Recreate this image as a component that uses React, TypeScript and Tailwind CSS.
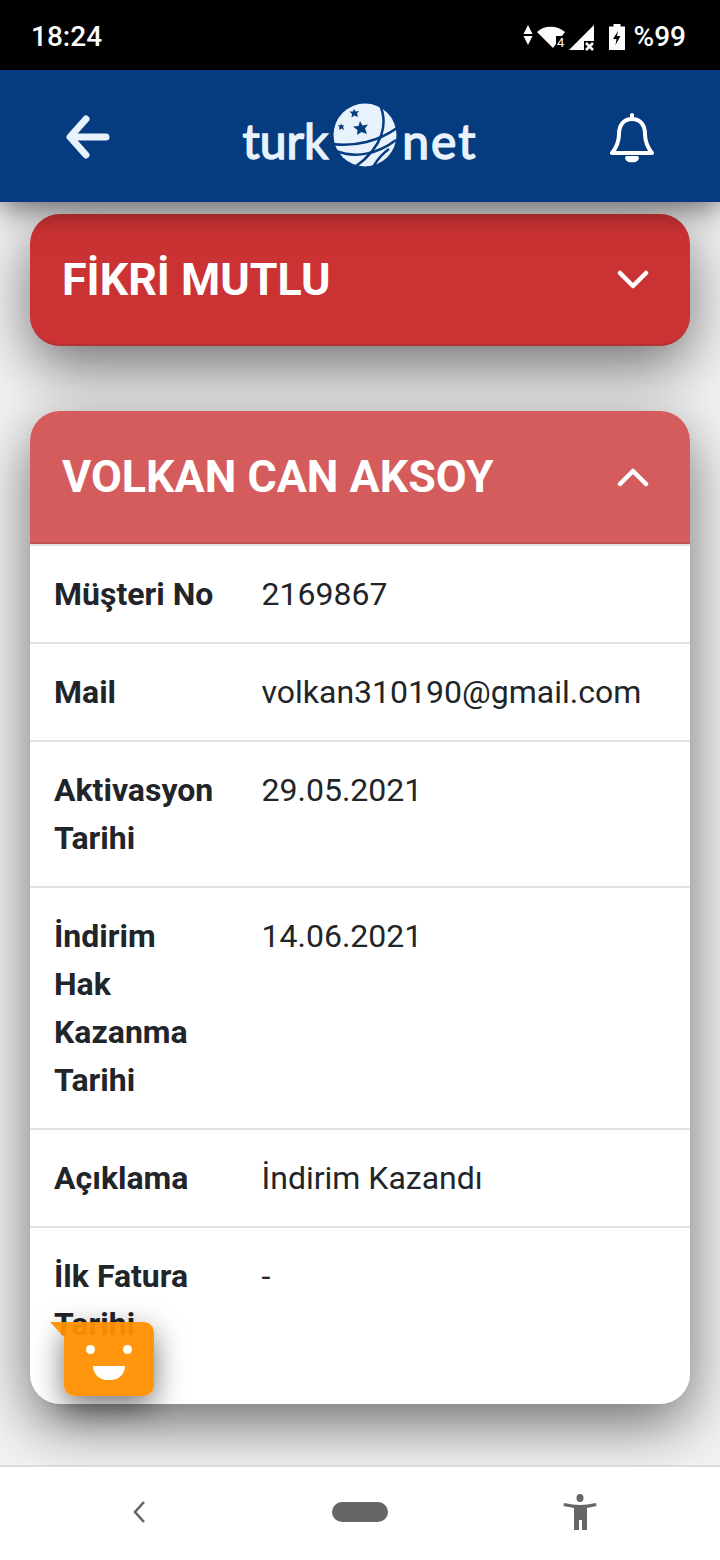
// Turknet customer detail screen

const rows = [
  { label: 'Müşteri No', value: '2169867' },
  { label: 'Mail', value: 'volkan310190@gmail.com' },
  { label: 'Aktivasyon Tarihi', value: '29.05.2021' },
  { label: 'İndirim Hak Kazanma Tarihi', value: '14.06.2021' },
  { label: 'Açıklama', value: 'İndirim Kazandı' },
]

function StatusIcons() {
  return (
    <svg width="73" height="30" viewBox="0 0 73 30" aria-hidden="true">
      {/* data arrows */}
      <path d="M5 3 L9.500 12 L0.500 12 Z M0.500 14 L9.500 14 L5 23 Z" fill="#fff" />
      {/* wifi */}
      <path d="M14 10 C21 3 34 3 42 10 L30 26 Z" fill="#fff" />
      <rect x="33" y="14" width="12" height="14" fill="#000" />
      <text x="34" y="25" fontSize="13" fill="#fff" fontFamily="Roboto, sans-serif">4</text>
      {/* cell signal */}
      <path d="M46 28 L71 3 L71 19 L61 19 L61 28 Z" fill="#fff" />
      <path d="M63 21 L70 28 M70 21 L63 28" stroke="#fff" strokeWidth="2.600" fill="none" />
    </svg>
  )
}

function Globe() {
  return (
    <svg width="64" height="64" viewBox="0 0 64 64" aria-hidden="true">
      <ellipse cx="32" cy="32" rx="31.500" ry="31.500" fill="#e8f2fd" />
      <path d="M46 0 C56 20 50 44 22 64" stroke="#053c7f" strokeWidth="2.500" fill="none" />
      <path d="M-1 41 C22 44 46 38 64 25" stroke="#053c7f" strokeWidth="2.500" fill="none" />
      <path d="M3 48 C24 56 46 50 63 37" stroke="#053c7f" strokeWidth="2.500" fill="none" />
      <path d="M40 64 C46 54 50 50 56 46" stroke="#053c7f" strokeWidth="2.500" fill="none" />
      <polygon points="27,18 29.500,22.500 35,21.500 32,25.500 34,31 28.500,29 24,32 24.500,27 20,23.500 25.500,23" fill="#053c7f" />
      <polygon points="21,6 22.500,8.500 26,8 24,10.500 25,14 21.500,12.500 18.500,14.500 19,11 16.500,8.500 20,8.500" fill="#053c7f" />
      <polygon points="8,20 9,22.500 11.500,22 10,24 11,27 8.500,25.500 6,27 6.500,24.500 5,22 7.500,22.500" fill="#053c7f" />
    </svg>
  )
}

function Chevron({ up }: { up?: boolean }) {
  return (
    <svg className={up ? '' : 'mt-[2px]'} width="32" height="20" viewBox="0 0 32 20" fill="none" stroke="#fff" strokeWidth="4.500" strokeLinecap="round" strokeLinejoin="round" aria-hidden="true">
      <path d={up ? 'M3 17 L16 4 L29 17' : 'M3 3 L16 16 L29 3'} />
    </svg>
  )
}

export default function App() {
  return (
    <div className="relative flex h-[1560px] w-[720px] flex-col overflow-hidden bg-[#f3f3f3] font-['Roboto',sans-serif] text-[#212529]">
      {/* Status bar */}
      <div className="flex h-[70px] items-center justify-between bg-black pl-[31px] pr-[34px] pt-[4px] text-white">
        <span className="text-[28px] font-medium leading-none">18:24</span>
        <div className="flex items-center">
          <StatusIcons />
          <svg className="ml-[13px]" width="16" height="26" viewBox="0 0 16 26" aria-hidden="true">
            <path fillRule="evenodd" d="M4.500 0 H11.500 V2.500 H16 V26 H0 V2.500 H4.500 Z M9 7 L4 15 H7.500 L6.500 21 L11.500 12 H8 Z" fill="#fff" />
          </svg>
          <span className="ml-[9px] text-[28px] font-medium leading-none">%99</span>
        </div>
      </div>

      {/* App header */}
      <header className="relative z-10 flex h-[132px] items-center justify-between bg-[#053c7f] px-[66px] shadow-[0_6px_30px_rgba(0,0,0,0.6)]">
        <svg className="mt-[2px]" width="44" height="44" viewBox="0 0 44 44" fill="none" stroke="#e8f2fd" strokeWidth="7" strokeLinecap="round" strokeLinejoin="round" aria-hidden="true">
          <path d="M40 22 H5 M20 4 L4 22 L20 40" />
        </svg>

        <div className="mb-[2px] flex items-center text-[#e8f2fd]">
          <span className="pt-[12px] font-['Lato',sans-serif] text-[48px] leading-none [-webkit-text-stroke:1.5px_#e8f2fd]">turk</span>
          <div className="mx-[5px]"><Globe /></div>
          <span className="pt-[12px] font-['Lato',sans-serif] text-[48px] leading-none tracking-[2px] [-webkit-text-stroke:1.5px_#e8f2fd]">net</span>
        </div>

        <svg className="mt-[4px]" width="44" height="50" viewBox="0 0 44 50" fill="none" stroke="#fff" strokeWidth="4" strokeLinecap="round" strokeLinejoin="round" aria-hidden="true">
          <path d="M22 2 V6 M22 6 C13 6 9 13 9 21 C9 30 6 35 2 40 H42 C38 35 35 30 35 21 C35 13 31 6 22 6 Z" />
          <path d="M17 45 H27 C26 48 18 48 17 45 Z" fill="#fff" />
        </svg>
      </header>

      {/* Customer list */}
      <main className="flex flex-1 flex-col gap-[65px] px-[30px] pt-3">
        <section className="flex h-[132px] items-center justify-between rounded-[30px] border-b-2 border-[#b53032] bg-[#cb3234] pl-[32px] pr-[41px] text-white shadow-[0_20px_60px_rgba(0,0,0,0.55)]">
          <h2 className="pt-[2px] text-[44.8px] font-bold leading-none">FİKRİ MUTLU</h2>
          <Chevron />
        </section>

        <section className="h-[993px] overflow-hidden rounded-[30px] bg-white shadow-[0_20px_60px_rgba(0,0,0,0.55)]">
          <div className="flex h-[133px] items-center justify-between border-b-2 border-[#bf5253] bg-[#d55c5c] pl-[32px] pr-[41px] text-white">
            <h2 className="pt-[2px] text-[44.8px] font-bold leading-none">VOLKAN CAN AKSOY</h2>
            <Chevron up />
          </div>

          <div className="border-t-2 border-[#dee2e6]">
            {rows.map((row) => (
              <div key={row.label} className="flex border-b-2 border-[#dee2e6] text-[32px] leading-[48px]">
                <div className="w-[208px] shrink-0 p-6 font-bold">{row.label}</div>
                <div className="py-6 pl-[23.5px]">{row.value}</div>
              </div>
            ))}

            <div className="flex text-[32px] leading-[48px]">
              <div className="w-[208px] shrink-0 p-6 font-bold">İlk Fatura Tarihi</div>
              <div className="py-6 pl-[23.5px]">-</div>
            </div>
          </div>
        </section>
      </main>

      {/* Chat bubble */}
      <div className="absolute left-[64px] top-[1322px] z-20 flex h-[74px] w-[90px] flex-col items-center rounded-b-[10px] rounded-tr-[10px] bg-[#ff9000]/95 shadow-[0_10px_30px_rgba(0,0,0,0.55)]">
        <div className="absolute -left-[14px] top-0 h-0 w-0 border-r-[14px] border-t-[15px] border-r-[#ff9000]/95 border-t-transparent [transform:scaleY(-1)]" />
        <div className="mt-[23px] flex gap-[28px]">
          <span className="h-[9px] w-[9px] rounded-full bg-white" />
          <span className="h-[9px] w-[9px] rounded-full bg-white" />
        </div>
        <div className="mt-[12px] h-[14px] w-[32px] rounded-b-[16px] bg-white" />
      </div>

      {/* Android navigation bar */}
      <nav className="flex h-[95px] items-center border-t-2 border-[#dcdae0] bg-white">
        <div className="flex w-full items-center justify-between pb-[4px] pl-[131px] pr-[123px]">
          <svg className="mr-[10px]" width="16" height="24" viewBox="0 0 16 24" fill="none" stroke="#666" strokeWidth="2.600" aria-hidden="true">
            <path d="M13 2 L4 12 L13 22" />
          </svg>
          <div className="h-5 w-14 rounded-full bg-[#666]" />
          <svg width="34" height="38" viewBox="0 0 34 38" fill="#666" aria-hidden="true">
            <ellipse cx="17" cy="5" rx="3.500" ry="4" />
            <path d="M1 10 C7 11 12 12 17 12 C22 12 27 11 33 10 L33.500 13 L24 15 V37 H19 V27 H16 V37 H11 V15 L0.500 13 Z" />
          </svg>
        </div>
      </nav>
    </div>
  )
}
